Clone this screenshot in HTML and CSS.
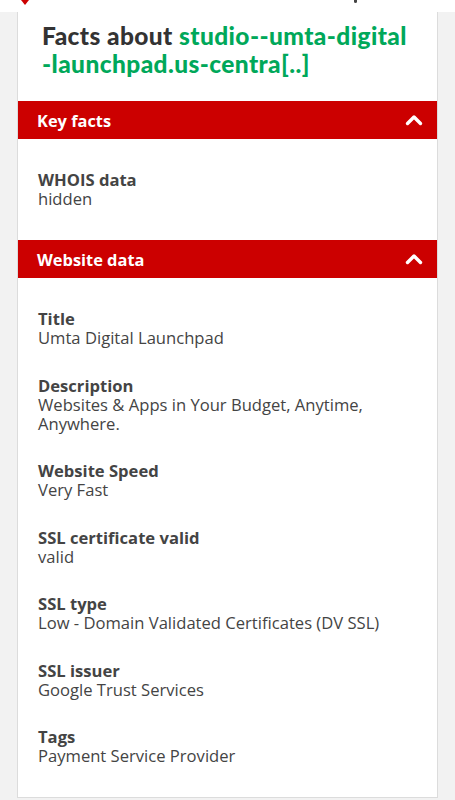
FILE: index.html
```html
<!DOCTYPE html>
<html>
<head>
<meta charset="utf-8">
<link rel="stylesheet" href="styles.css">
</head>
<body>
<div class="topbar">
  <span class="logo-tip"></span>
  <span class="top-dot"></span>
</div>
<div class="card">
  <h1 class="heading">Facts about <span class="domain">studio--umta-digital<br>-launchpad.us-centra[..]</span></h1>

  <div class="bar">
    <span class="bar-title">Key facts</span>
    <svg class="chev" width="18" height="12" viewBox="0 0 18 12"><polyline points="2.5,9.5 9,3 15.5,9.5" fill="none" stroke="#fff" stroke-width="3.4" stroke-linecap="round" stroke-linejoin="round"/></svg>
  </div>
  <div class="section">
    <div class="item"><div class="label">WHOIS data</div><div class="value">hidden</div></div>
  </div>

  <div class="bar">
    <span class="bar-title">Website data</span>
    <svg class="chev" width="18" height="12" viewBox="0 0 18 12"><polyline points="2.5,9.5 9,3 15.5,9.5" fill="none" stroke="#fff" stroke-width="3.4" stroke-linecap="round" stroke-linejoin="round"/></svg>
  </div>
  <div class="section">
    <div class="item"><div class="label">Title</div><div class="value">Umta Digital Launchpad</div></div>
    <div class="item"><div class="label">Description</div><div class="value">Websites &amp; Apps in Your Budget, Anytime, Anywhere.</div></div>
    <div class="item"><div class="label">Website Speed</div><div class="value">Very Fast</div></div>
    <div class="item"><div class="label">SSL certificate valid</div><div class="value">valid</div></div>
    <div class="item"><div class="label">SSL type</div><div class="value">Low - Domain Validated Certificates (DV SSL)</div></div>
    <div class="item"><div class="label">SSL issuer</div><div class="value">Google Trust Services</div></div>
    <div class="item"><div class="label">Tags</div><div class="value">Payment Service Provider</div></div>
  </div>
</div>
</body>
</html>
```

FILE: styles.css
```css
html, body {
  margin: 0;
  padding: 0;
}
body {
  background: #f2f2f2;
  font-family: "Open Sans", "Liberation Sans", sans-serif;
  color: #444;
  height: 800px;
  overflow: hidden;
}
.topbar {
  height: 12px;
  background: #fff;
  position: relative;
}
.logo-tip {
  position: absolute;
  left: 21px;
  top: 0;
  width: 0;
  height: 0;
  border-left: 4px solid transparent;
  border-right: 4px solid transparent;
  border-top: 5px solid #cc0000;
}
.top-dot {
  position: absolute;
  left: 354px;
  top: 0;
  width: 3px;
  height: 3px;
  border-radius: 0 0 2px 2px;
  background: #444;
}
.card {
  margin: 0 17px;
  background: #fff;
  border: 1px solid #dcdcdc;
  border-top: none;
}
.heading {
  margin: 0;
  padding: 10px 20px 23px 24px;
  font-family: "Lato", "Liberation Sans", sans-serif;
  font-weight: 900;
  font-size: 24.5px;
  line-height: 28px;
  color: #333;
  letter-spacing: 0.4px;
  white-space: nowrap;
}
.domain {
  color: #00a85a;
}
.bar {
  background: #cc0000;
  height: 38px;
  display: flex;
  align-items: center;
  justify-content: space-between;
  padding: 0 14px 0 19px;
}
.bar-title {
  color: #fff;
  font-weight: 700;
  font-size: 16.4px;
}
.chev {
  display: block;
}
.section {
  padding: 31px 20px 32px 20px;
  display: flex;
  flex-direction: column;
  gap: 28.5px;
}
.item {
  font-size: 16.6px;
  line-height: 19px;
}
.label {
  font-weight: 700;
}
.value {
  font-weight: 400;
}
```
